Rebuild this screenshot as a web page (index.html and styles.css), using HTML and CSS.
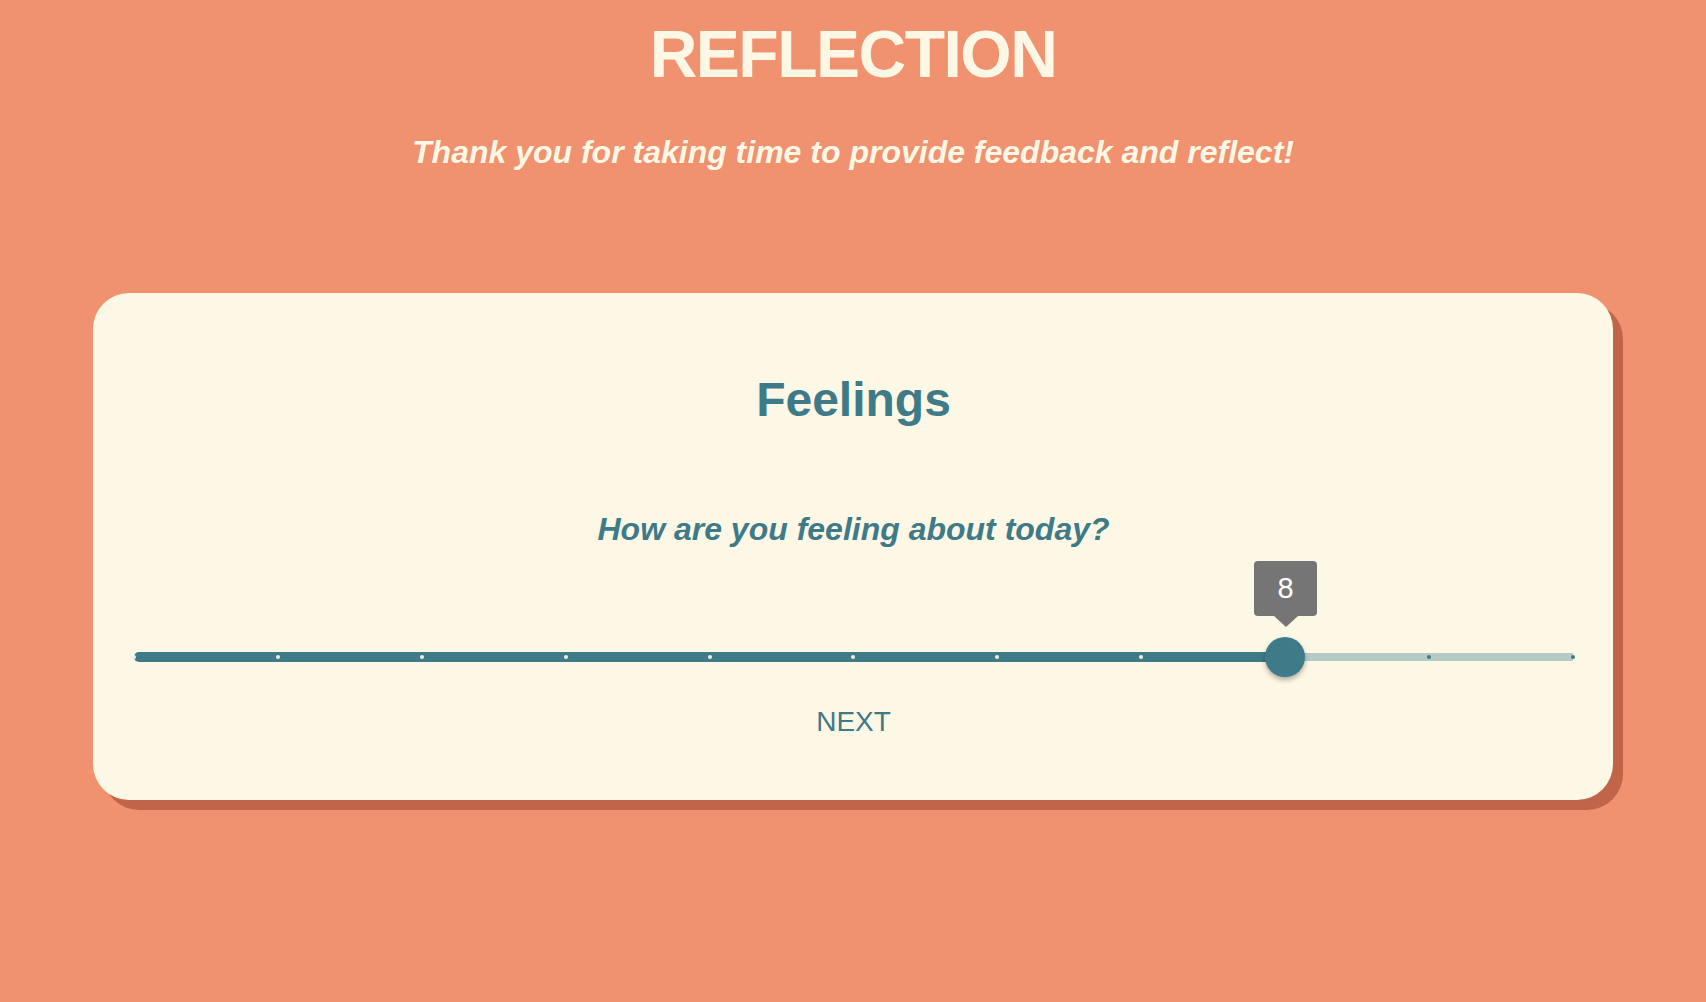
FILE: index.html
```html
<!DOCTYPE html>
<html lang="en">
<head>
<meta charset="utf-8">
<title>Reflection</title>
<link rel="stylesheet" href="styles.css">
</head>
<body>
  <header class="page-head">
    <h1 class="title">REFLECTION</h1>
    <p class="subtitle">Thank you for taking time to provide feedback and reflect!</p>
  </header>
  <main class="card">
    <h2 class="card-title">Feelings</h2>
    <p class="question">How are you feeling about today?</p>
    <div class="slider">
      <div class="track">
        <div class="fill" style="width: 80%"></div>
        <div class="rest"></div>
      </div>
      <div class="ticks">
        <span class="tick on"></span>
        <span class="tick on"></span>
        <span class="tick on"></span>
        <span class="tick on"></span>
        <span class="tick on"></span>
        <span class="tick on"></span>
        <span class="tick on"></span>
        <span class="tick on"></span>
        <span class="tick on"></span>
        <span class="tick off"></span>
        <span class="tick off"></span>
      </div>
      <div class="thumb" style="left: 80%">
        <div class="tip">8</div>
      </div>
    </div>
    <button class="next">NEXT</button>
  </main>
</body>
</html>
```
FILE: styles.css
```css
html, body {
  margin: 0;
  padding: 0;
}
body {
  background: #f09170;
  font-family: "Liberation Sans", Arial, Helvetica, sans-serif;
  min-height: 1002px;
}
.page-head {
  display: flex;
  flex-direction: column;
  align-items: center;
  color: #fdf8e5;
}
.title {
  margin: 21px 0 0;
  font-size: 66px;
  line-height: 66px;
  font-weight: 700;
  letter-spacing: -1.5px;
}
.subtitle {
  margin: 49px 0 0;
  font-size: 32px;
  line-height: 32px;
  font-weight: 700;
  font-style: italic;
}
.card {
  width: 1520px;
  box-sizing: border-box;
  margin: 125px auto 0;
  padding: 83px 40px 64px 41px;
  background: #fdf8e5;
  border-radius: 36px;
  box-shadow: 10px 10px 0 #c0654a;
  display: flex;
  flex-direction: column;
  align-items: center;
  color: #3f7a89;
}
.card-title {
  margin: 0;
  font-size: 48px;
  line-height: 48px;
  font-weight: 700;
}
.question {
  margin: 89px 0 0;
  font-size: 32px;
  line-height: 32px;
  font-weight: 700;
  font-style: italic;
}
.slider {
  position: relative;
  align-self: stretch;
  height: 40px;
  margin-top: 92px;
  display: flex;
  align-items: center;
}
.track {
  width: 100%;
  display: flex;
  align-items: center;
}
.fill {
  height: 10px;
  background: #3f7a89;
  border-radius: 5px 0 0 5px;
}
.rest {
  flex: 1;
  height: 8px;
  background: #b4cac4;
}
.ticks {
  position: absolute;
  left: -2px;
  right: -2px;
  top: 0;
  bottom: 0;
  display: flex;
  justify-content: space-between;
  align-items: center;
}
.tick {
  width: 4px;
  height: 4px;
  border-radius: 50%;
}
.tick.on {
  background: #e9eff0;
}
.tick.off {
  background: #3f7a89;
}
.thumb {
  position: absolute;
  top: 0;
  width: 40px;
  height: 40px;
  margin-left: -20px;
  border-radius: 50%;
  background: #3f7a89;
  box-shadow: 0 3px 5px rgba(0, 0, 0, 0.3);
}
.tip {
  position: absolute;
  bottom: 61px;
  left: 50%;
  margin-left: -31px;
  width: 63px;
  height: 55px;
  background: #757575;
  border-radius: 4px;
  color: #ffffff;
  font-size: 29px;
  line-height: 55px;
  text-align: center;
}
.tip::after {
  content: "";
  position: absolute;
  left: 50%;
  top: 100%;
  margin-left: -12px;
  border-left: 12px solid transparent;
  border-right: 12px solid transparent;
  border-top: 11px solid #757575;
}
.next {
  margin-top: 31px;
  padding: 0;
  border: 0;
  background: none;
  color: #3f7a89;
  font-family: "Liberation Sans", Arial, Helvetica, sans-serif;
  font-size: 28px;
  line-height: 28px;
  cursor: pointer;
}
```
